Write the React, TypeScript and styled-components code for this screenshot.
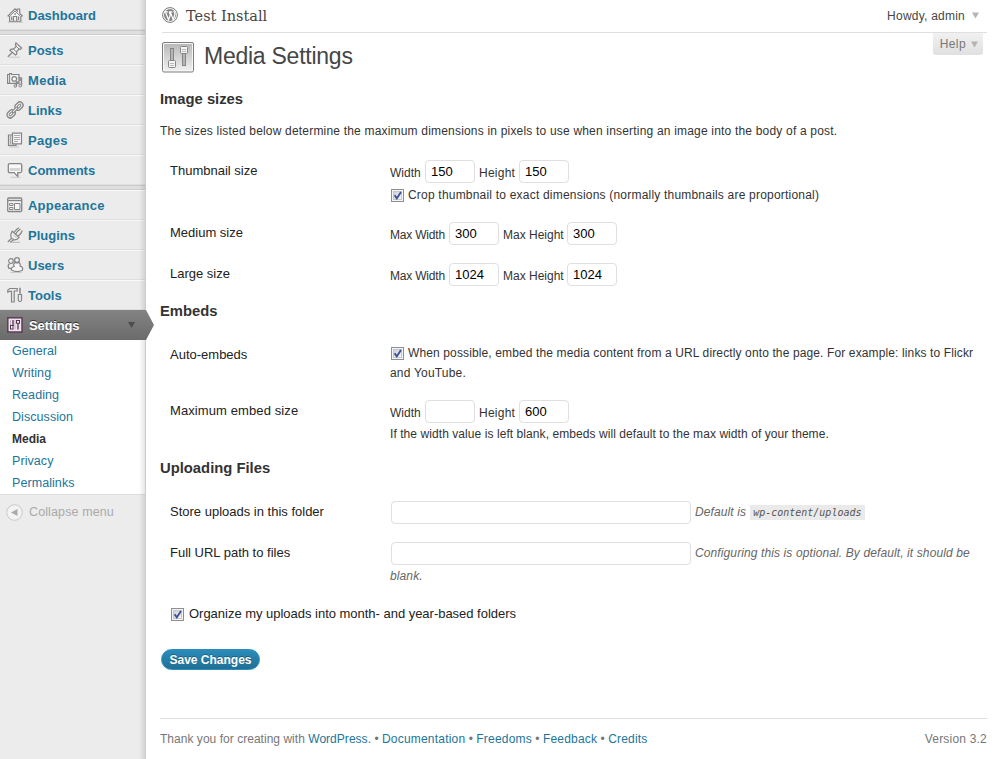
import React from "react";
import styled, { createGlobalStyle } from "styled-components";

const Global = createGlobalStyle`
  * { box-sizing: border-box; }
  body { margin: 0; background: #fff; color: #333; font: 12px/20px "Liberation Sans", Arial, sans-serif; }
  a { color: #21759b; text-decoration: none; }
`;

const Page = styled.div`
  display: flex;
  width: 1002px;
  height: 759px;
  overflow: hidden;
`;
const Sidebar = styled.nav`
  position: relative;
  display: flex;
  flex-direction: column;
  flex: none;
  width: 146px;
  background: #ececec;
  border-right: 1px solid #ccc;
`;
const EdgeShade = styled.div`
  position: absolute;
  top: 0;
  bottom: 0;
  right: 0;
  width: 6px;
  background: linear-gradient(to right, rgba(0, 0, 0, 0), rgba(0, 0, 0, 0.1));
`;
const MenuItem = styled.a<{ $first?: boolean; $ls?: number }>`
  display: flex;
  align-items: center;
  height: 30px;
  padding: 0 0 0 7px;
  gap: 5px;
  border-top: 1px solid ${(p) => (p.$first ? "#ececec" : "#f9f9f9")};
  border-bottom: 1px solid #dfdfdf;
  font-weight: bold;
  font-size: 13px;
  line-height: 26px;
  letter-spacing: ${(p) => p.$ls ?? 0}px;
  svg { flex: none; }
  span { padding-top: 2px; }
`;
const Separator = styled.div`
  height: 5px;
  background: #dfdfdf;
  border-top: 1px solid #cacaca;
  border-bottom: 1px solid #cfcfcf;
`;
const ActiveItem = styled.a`
  position: relative;
  z-index: 1;
  display: flex;
  align-items: center;
  height: 30px;
  padding: 0 10px 0 7px;
  gap: 6px;
  background: linear-gradient(#838383, #6b6b6b);
  color: #fff;
  font-weight: bold;
  font-size: 13px;
  letter-spacing: -0.1px;
  text-shadow: 0 -1px 0 #333;
  span { flex: 1; padding-top: 2px; }
`;
const ActivePointer = styled.svg`
  position: absolute;
  left: 145px;
  top: 0;
`;
const Submenu = styled.div`
  display: flex;
  flex-direction: column;
  background: #fff;
  border-bottom: 1px solid #dfdfdf;
  height: 155px;
`;
const SubItem = styled.a<{ $current?: boolean }>`
  height: 22px;
  padding-left: 12px;
  font-size: 12.5px;
  line-height: 22px;
  letter-spacing: 0.07px;
  ${(p) => p.$current && "color: #333; font-weight: bold; font-size: 12px; letter-spacing: 0;"}
`;
const Collapse = styled.div`
  display: flex;
  align-items: center;
  gap: 6px;
  height: 34px;
  padding-left: 6px;
  color: #aaa;
  font-size: 12.5px;
  letter-spacing: 0.12px;
`;

const Main = styled.main`
  display: flex;
  flex-direction: column;
  flex: 1;
  padding: 0 15px 0 14px;
`;
const Header = styled.header`
  display: flex;
  align-items: center;
  height: 33px;
  margin-left: 2px;
  padding-bottom: 2px;
  border-bottom: 1px solid #dfdfdf;
`;
const SiteName = styled.span`
  flex: 1;
  margin-left: 8px;
  padding-top: 1px;
  font: 14.5px/20px "DejaVu Serif", serif;
  color: #464646;
`;
const Account = styled.span`
  display: flex;
  align-items: center;
  gap: 7px;
  padding: 1px 8px 0 0;
  letter-spacing: 0.23px;
  color: #464646;
`;
const TitleRow = styled.div`
  display: flex;
  align-items: flex-start;
  height: 56px;
  padding-left: 2px;
`;
const TitleIcon = styled.svg`
  margin-top: 8px;
`;
const Title = styled.h2`
  flex: 1;
  margin: 8px 0 0 10px;
  font-size: 23px;
  font-weight: normal;
  line-height: 30px;
  letter-spacing: -0.25px;
  color: #464646;
`;
const HelpTab = styled.a`
  display: flex;
  align-items: center;
  gap: 5px;
  height: 22px;
  margin-right: 4px;
  padding: 0 5px 0 7px;
  border-radius: 0 0 3px 3px;
  background: linear-gradient(#f1f1f1, #e0e0e0);
  color: #777;
  letter-spacing: 0.4px;
`;
const Section = styled.h3<{ $top?: number }>`
  margin: ${(p) => p.$top ?? 0}px 0 0;
  height: 20px;
  font-size: 14.8px;
  line-height: 20px;
  color: #333;
`;
const Intro = styled.p`
  margin: 12px 0 0;
  letter-spacing: 0.19px;
`;
const Row = styled.div<{ $top: number }>`
  display: grid;
  grid-template-columns: 220px 1fr;
  margin-top: ${(p) => p.$top}px;
  padding-left: 10px;
`;
const RowLabel = styled.div<{ $drop?: number }>`
  padding-top: ${(p) => p.$drop ?? 0}px;
  font-size: 13px;
  line-height: 22px;
  color: #222;
`;
const Fields = styled.div`
  display: flex;
  flex-direction: column;
`;
const Line = styled.div<{ $top?: number; $indent?: number }>`
  display: flex;
  align-items: center;
  min-height: 20px;
  margin-top: ${(p) => p.$top ?? 0}px;
  padding-left: ${(p) => p.$indent ?? 0}px;
  white-space: nowrap;
`;
const FieldName = styled.span<{ $width: number; $ls?: number }>`
  width: ${(p) => p.$width}px;
  height: 23px;
  padding-top: 3px;
  line-height: 20px;
  letter-spacing: ${(p) => p.$ls ?? 0}px;
`;
const Input = styled.input<{ $wide?: boolean }>`
  width: ${(p) => (p.$wide ? 300 : 50)}px;
  height: 23px;
  margin: 0 4px 0 0;
  padding: 0 5px;
  border: 1px solid #dfdfdf;
  border-radius: 4px;
  background: #fff;
  color: #000;
  font: 13px "Liberation Sans", Arial, sans-serif;
  outline: none;
`;
const CheckSvg = styled.svg`
  flex: none;
  margin: 0 4px 0 0;
`;
const Spaced = styled.span<{ $ls: number }>`
  letter-spacing: ${(p) => p.$ls}px;
`;
const PlainLabel = styled.span`
  margin-left: 1px;
  font-size: 13px;
  letter-spacing: -0.02px;
  color: #222;
`;
const Hint = styled.span`
  padding-bottom: 2px;
  font-style: italic;
  color: #666;
  letter-spacing: 0.11px;
`;
const Code = styled.code`
  margin-left: 4px;
  padding: 0 3px;
  background: #eaeaea;
  font: italic 10px/15px "DejaVu Sans Mono", monospace;
  color: #555;
`;
const SaveButton = styled.button`
  align-self: flex-start;
  width: 99px;
  height: 21px;
  margin: 25px 0 0 1px;
  padding: 1px 0 0;
  border: 1px solid #298cba;
  border-radius: 11px;
  background: linear-gradient(#2a8cba, #216f94);
  color: #fff;
  font: bold 12px/18px "Liberation Sans", Arial, sans-serif;
  text-shadow: 0 -1px 0 rgba(0, 0, 0, 0.3);
`;
const Footer = styled.footer`
  display: flex;
  justify-content: space-between;
  margin-top: auto;
  height: 41px;
  padding-top: 10px;
  border-top: 1px solid #dfdfdf;
  color: #777;
  letter-spacing: 0.03px;
`;
const FooterLink = styled.a`
  letter-spacing: 0.2px;
`;

const Triangle = ({ color, w = 8, h = 7 }: { color: string; w?: number; h?: number }) => (
  <svg width={w} height={h} viewBox="0 0 8 7"><path d="M0 0h8L4 7z" fill={color} /></svg>
);

const Check = () => (
  <CheckSvg width="13" height="13" viewBox="0 0 13 13">
    <defs>
      <linearGradient id="box" x1="0" y1="0" x2="1" y2="1">
        <stop offset="0" stopColor="#c9ced6" /><stop offset="1" stopColor="#fafafa" />
      </linearGradient>
    </defs>
    <rect x=".5" y=".5" width="12" height="12" fill="#f4f4f4" stroke="#8e8f8f" />
    <rect x="2.5" y="2.5" width="8" height="8" fill="url(#box)" stroke="#c4c9d0" />
    <path d="M3.6 6.2l2.2 3.2L10 2.9" fill="none" stroke="#3c5095" strokeWidth="1.9" />
  </CheckSvg>
);

const icons: Record<string, React.ReactNode> = {
  Dashboard: (
    <>
      <path d="M1 8.8L8 1.800l2.300 2.300V2h2.400v4.500L15.200 8.800l-1.400.7v4.900H2.600V9.500z" fill="#f6f6f6" strokeWidth="1.200" />
      <path d="M3 8.800L8 4 13 8.800" />
      <path d="M6.500 14.500V9.500h3.200v5M4.700 9.500v3.500M11.600 9.500v3.500M8.100 6v2" strokeWidth="1.200" />
      <path d="M1 15.200h15" stroke="#c4c4c4" />
    </>
  ),
  Posts: (
    <>
      <path d="M9 .9l5.600 5.200-1.300 1.200-1.300-.3-2.400 2.700.2 2.300-1.300 1L2.900 8.300l1.300-1.200 2.300.1L9.200 4.400l-.8-1.800z" fill="#f0f0f0" strokeWidth="1.200" />
      <path d="M5.300 10.500L.8 14.800" strokeWidth="1.300" />
      <path d="M6.500 7.200l3.300 3M9.200 4.200L12 7" />
      <path d="M2 15.200h11" stroke="#c8c8c8" />
    </>
  ),
  Media: (
    <>
      <path d="M.6 2.500h1.900V1.500h2v1h7.500v8.800H.6z" fill="#f0f0f0" strokeWidth="1.200" />
      <path d="M2.600 3v8" />
      <circle cx="7.300" cy="6.900" r="2.300" fill="#fff" strokeWidth="1.300" />
      <path d="M11.500 6h3v7.500M9.500 13.500V10h2M12 8h2.500" strokeWidth="1.300" />
      <circle cx="8.300" cy="14" r="1.300" fill="#ddd" />
      <circle cx="13.300" cy="13.600" r="1.400" fill="#ddd" />
    </>
  ),
  Links: (
    <g transform="rotate(-45 8 8)">
      <rect x="-2" y="4.800" width="9" height="6.400" rx="3.200" fill="#f2f2f2" strokeWidth="1.300" />
      <rect x=".2" y="6.900" width="4.400" height="2.200" rx="1.100" fill="#ececec" />
      <rect x="9" y="4.800" width="9" height="6.400" rx="3.200" fill="#f2f2f2" strokeWidth="1.300" />
      <rect x="11.400" y="6.900" width="4.400" height="2.200" rx="1.100" fill="#ececec" />
      <rect x="4.800" y="7" width="6.600" height="2" rx=".8" fill="#f6f6f6" />
    </g>
  ),
  Pages: (
    <>
      <path d="M5.500 3H1.500v10.500h7.500V12" fill="#ddd" strokeWidth="1.200" />
      <path d="M5.500 1.200h9v10.600h-9z" fill="#f6f6f6" strokeWidth="1.200" />
      <path d="M3.500 3v9.500M7 3.500h6M7 5.500h6M7 7.500h6M7 9.500h4" stroke="#aaa" />
      <path d="M2 15h10" stroke="#c4c4c4" />
    </>
  ),
  Comments: (
    <>
      <path d="M2.800 1.600h10.400q1.500 0 1.500 1.500v6q0 1.500-1.500 1.500h-2.400v4l-3.700-4H2.800Q1.300 10.600 1.300 9.100V3.100Q1.300 1.600 2.800 1.600z" fill="#f8f8f8" strokeWidth="1.300" />
      <path d="M2.800 6h10.500v3H2.800z" fill="#d6d6d6" stroke="none" />
      <path d="M3.500 15.300h10" stroke="#c8c8c8" />
    </>
  ),
  Appearance: (
    <>
      <rect x=".7" y="1" width="14" height="13.500" rx="1" fill="#f6f6f6" strokeWidth="1.300" />
      <path d="M1 3.500h13.500" strokeWidth="1.400" />
      <path d="M2.500 6.500h3.500v2H2.500zM2.500 10.500h3.500v2H2.500zM7.500 6.500h5.500v6H7.500z" />
    </>
  ),
  Plugins: (
    <>
      <path d="M5.300 4.200l6.800 6.300q-2 2.700-5 2.300Q3 11.500 4 7.500 4.300 5.500 5.300 4.200z" fill="#f2f2f2" strokeWidth="1.200" />
      <path d="M4.500 11.300L.8 15M6.500 13L3 15.300M7 5.500Q9.500 2 12 .8M11 9.300Q14.500 6.500 15.300 3.500M8.500 7.500Q10 4 13.500 2" strokeWidth="1.200" />
      <path d="M6.500 8l3 3M5 10.500l1.500 1.500M3 15.300h10" stroke="#b5b5b5" />
    </>
  ),
  Users: (
    <>
      <circle cx="4" cy="4" r="2.300" fill="#f2f2f2" strokeWidth="1.200" />
      <path d="M2.500 6.500Q.2 8.500 1.800 11.300h4" fill="#f2f2f2" strokeWidth="1.200" />
      <circle cx="10" cy="3" r="2.400" fill="#f2f2f2" strokeWidth="1.200" />
      <path d="M8 5.200Q5.800 8 7.200 9.500 3.600 10.500 4.400 13q5.400 3.200 11 .3Q16.500 10 13.200 9.200q.5-2.600-1.200-4Q10 6.800 8 5.200z" fill="#f6f6f6" strokeWidth="1.200" />
      <path d="M3.500 15.500h11" stroke="#c8c8c8" />
    </>
  ),
  Tools: (
    <>
      <path d="M.8 5.300V3L2.800 1.500h7.400v2.500H7.200v11H4.500V4.300H2.500z" fill="#eaeaea" strokeWidth="1.200" />
      <path d="M13 .8v6" strokeWidth="1.500" />
      <path d="M11.300 7.500h3.200v6q-1.600 2.200-3.200 0z" fill="#eee" strokeWidth="1.200" />
    </>
  ),
};

const MenuIcon = ({ name }: { name: string }) => (
  <svg width="16" height="16" viewBox="0 0 16 16" fill="none" stroke="#858585" overflow="visible">{icons[name]}</svg>
);

const SettingsIcon = () => (
  <svg width="16" height="16" viewBox="0 0 16 16">
    <rect x=".8" y=".8" width="14.200" height="14.200" fill="#efe4ee" stroke="#5c3d5a" strokeWidth="1.500" />
    <path d="M6 3v6M11 6v6.500" stroke="#55334f" strokeWidth="1.300" />
    <rect x="3.500" y="8.500" width="2.500" height="3.500" fill="#fff" stroke="#55334f" />
    <rect x="9.500" y="3.500" width="3" height="2.700" fill="#fff" stroke="#55334f" />
    <path d="M3.500 3v5M8 3v9.500" stroke="#c8afc5" />
  </svg>
);

const Logo = () => (
  <svg width="16" height="16" viewBox="0 0 16 16" fill="none" stroke="#777">
    <circle cx="8" cy="8" r="7.400" />
    <circle cx="8" cy="8" r="6" fill="#858585" stroke="none" />
    <path d="M2.500 4.800h3.300M7 4.800h3.400M3.500 5l3 7.800L8.300 8 7.200 5M8.300 5l2.900 7.700 1.700-5.200q.3-1.700-1.100-3.700" stroke="#fff" strokeWidth="1.200" />
  </svg>
);

const Item = ({ name, first, spacing }: { name: string; first?: boolean; spacing?: number }) => (
  <MenuItem href="#" $first={first} $ls={spacing}><MenuIcon name={name} /><span>{name}</span></MenuItem>
);

export default function App() {
  return (
    <Page>
      <Global />
      <Sidebar>
        <Item name="Dashboard" first />
        <Separator />
        {["Posts", "Media", "Links", "Pages", "Comments"].map((n) => <Item key={n} name={n} spacing={n === "Media" || n === "Pages" ? 0.3 : 0} />)}
        <Separator />
        <Item name="Appearance" spacing={0.22} />
        {["Plugins", "Users", "Tools"].map((n) => <Item key={n} name={n} />)}
        <ActiveItem href="#">
          <SettingsIcon />
          <span>Settings</span>
          <Triangle color="#4c4c4c" w={7} h={6} />
          <ActivePointer width="9" height="30" viewBox="0 0 9 30">
            <defs><linearGradient id="tip" x1="0" y1="0" x2="0" y2="1"><stop stopColor="#838383" /><stop offset="1" stopColor="#6b6b6b" /></linearGradient></defs>
            <path d="M0 0h1l8 15-8 15H0z" fill="url(#tip)" />
          </ActivePointer>
        </ActiveItem>
        <Submenu>
          {["General", "Writing", "Reading", "Discussion"].map((n) => <SubItem key={n} href="#">{n}</SubItem>)}
          <SubItem href="#" $current>Media</SubItem>
          <SubItem href="#">Privacy</SubItem>
          <SubItem href="#">Permalinks</SubItem>
        </Submenu>
        <Collapse>
          <svg width="17" height="17" viewBox="0 0 17 17">
            <circle cx="8.500" cy="8.500" r="7.800" fill="#f3f3f3" stroke="#c8c8c8" />
            <path d="M11.500 5v7L5 8.500z" fill="#aaa" />
          </svg>
          Collapse menu
        </Collapse>
        <EdgeShade />
      </Sidebar>
      <Main>
        <Header>
          <Logo />
          <SiteName>Test Install</SiteName>
          <Account>Howdy, admin <Triangle color="#b4b4b4" w={7} h={7} /></Account>
        </Header>
        <TitleRow>
          <TitleIcon width="32" height="32" viewBox="0 0 32 32">
            <defs>
              <linearGradient id="plate" x1="0" y1="0" x2="0" y2="1"><stop stopColor="#b9b9b9" /><stop offset="1" stopColor="#efefef" /></linearGradient>
            </defs>
            <rect x=".5" y="1.500" width="31" height="29.500" rx="1.500" fill="#f8f8f8" stroke="#7c7c7c" />
            <rect x="2" y="3" width="28" height="26.500" fill="url(#plate)" />
            <g stroke="#858585" fill="#b5b5b5">
              <rect x="8.500" y="7.500" width="3" height="13" />
              <rect x="20.500" y="12.500" width="3" height="12" />
            </g>
            <g stroke="#858585" fill="#f4f4f4">
              <rect x="6.500" y="19.500" width="7" height="7" rx="1" />
              <rect x="18.500" y="5.500" width="7" height="7" rx="1" />
            </g>
            <path d="M8 22.500h4M8 24.500h4M20 8.500h4M20 10.500h4" stroke="#bbb" />
          </TitleIcon>
          <Title>Media Settings</Title>
          <HelpTab href="#">Help <Triangle color="#b4b4b4" w={7} h={7} /></HelpTab>
        </TitleRow>
        <Section>Image sizes</Section>
        <Intro>The sizes listed below determine the maximum dimensions in pixels to use when inserting an image into the body of a post.</Intro>
        <Row $top={19}>
          <RowLabel>Thumbnail size</RowLabel>
          <Fields>
            <Line>
              <FieldName $width={35}>Width</FieldName><Input defaultValue="150" />
              <FieldName $width={40} $ls={0.25}>Height</FieldName><Input defaultValue="150" />
            </Line>
            <Line $top={2} $indent={1}><Check /><Spaced $ls={0.205}>Crop thumbnail to exact dimensions (normally thumbnails are proportional)</Spaced></Line>
          </Fields>
        </Row>
        <Row $top={17}>
          <RowLabel>Medium size</RowLabel>
          <Line>
            <FieldName $width={59} $ls={-0.2}>Max Width</FieldName><Input defaultValue="300" />
            <FieldName $width={64}>Max Height</FieldName><Input defaultValue="300" />
          </Line>
        </Row>
        <Row $top={18}>
          <RowLabel>Large size</RowLabel>
          <Line>
            <FieldName $width={59} $ls={-0.2}>Max Width</FieldName><Input defaultValue="1024" />
            <FieldName $width={64}>Max Height</FieldName><Input defaultValue="1024" />
          </Line>
        </Row>
        <Section $top={15}>Embeds</Section>
        <Row $top={22}>
          <RowLabel $drop={1}>Auto-embeds</RowLabel>
          <Fields>
            <Line $indent={1}><Check /><Spaced $ls={0.125}>When possible, embed the media content from a URL directly onto the page. For example: links to Flickr</Spaced></Line>
            <Line><Spaced $ls={0.2}>and YouTube.</Spaced></Line>
          </Fields>
        </Row>
        <Row $top={17}>
          <RowLabel><Spaced $ls={0.1}>Maximum embed size</Spaced></RowLabel>
          <Fields>
            <Line>
              <FieldName $width={35}>Width</FieldName><Input defaultValue="" />
              <FieldName $width={40} $ls={0.25}>Height</FieldName><Input defaultValue="600" />
            </Line>
            <Line $top={1}><Spaced $ls={0.07}>If the width value is left blank, embeds will default to the max width of your theme.</Spaced></Line>
          </Fields>
        </Row>
        <Section $top={14}>Uploading Files</Section>
        <Row $top={23}>
          <RowLabel>Store uploads in this folder</RowLabel>
          <Line $indent={1}><Input $wide defaultValue="" /><Hint>Default is</Hint><Code>wp-content/uploads</Code></Line>
        </Row>
        <Row $top={18}>
          <RowLabel>Full URL path to files</RowLabel>
          <Fields>
            <Line $indent={1}><Input $wide defaultValue="" /><Hint>Configuring this is optional. By default, it should be</Hint></Line>
            <Line $top={1}><Hint>blank.</Hint></Line>
          </Fields>
        </Row>
        <Line $top={16} $indent={11}><Check /><PlainLabel>Organize my uploads into month- and year-based folders</PlainLabel></Line>
        <SaveButton>Save Changes</SaveButton>
        <Footer>
          <span>
            Thank you for creating with <a href="#">WordPress.</a> • <FooterLink href="#">Documentation</FooterLink> • <FooterLink href="#">Freedoms</FooterLink> • <FooterLink href="#">Feedback</FooterLink> • <FooterLink href="#">Credits</FooterLink>
          </span>
          <Spaced $ls={0.2}>Version 3.2</Spaced>
        </Footer>
      </Main>
    </Page>
  );
}
